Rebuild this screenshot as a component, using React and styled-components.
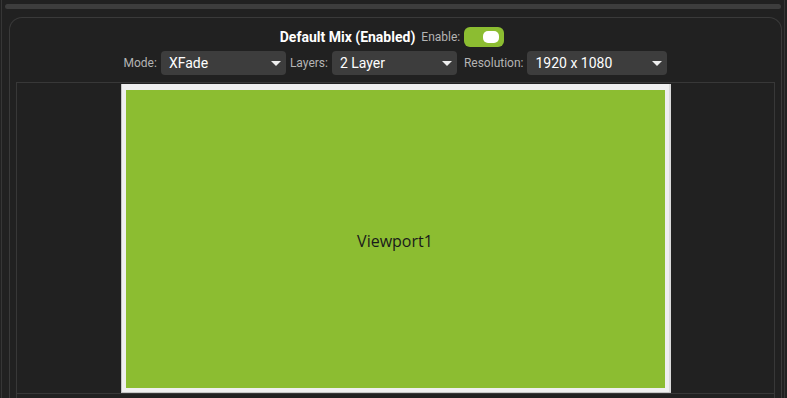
import React from "react";
import styled, { createGlobalStyle } from "styled-components";

const Global = createGlobalStyle`
  html, body { margin: 0; padding: 0; background: #212121; }
  body { font-family: Roboto, "Liberation Sans", sans-serif; overflow: hidden; }
  * { box-sizing: border-box; }
`;

const Shell = styled.div`
  height: 398px;
  margin: 0 2px 0 1px;
  border-left: 1px solid #363636;
  border-right: 1px solid #363636;
  padding: 4px 3px 0 3px;
  display: flex;
  flex-direction: column;
  background: #212121;
  overflow: hidden;
`;

const ScrollBar = styled.div`
  height: 5px;
  border-radius: 3px;
  background: #3d3d3d;
  flex: none;
`;

const Card = styled.section`
  flex: 1;
  margin: 8px -1px 0 4px;
  border: 1px solid #3a3a3a;
  border-bottom: none;
  border-radius: 13px 13px 0 0;
  padding: 9px 6px 0 6px;
  display: flex;
  flex-direction: column;
  min-height: 0;
`;

const HeaderRow = styled.div`
  display: flex;
  align-items: center;
  justify-content: center;
  height: 20px;
  padding-right: 7px;
`;

const Title = styled.span`
  color: #ffffff;
  font-weight: 700;
  font-size: 14px;
  margin-right: 6px;
`;

const Label = styled.span`
  color: #b4b4b4;
  font-size: 12px;
  white-space: nowrap;
  margin-right: ${(p) => p.$gap || 0}px;
`;

const Toggle = styled.div`
  width: 40px;
  height: 20px;
  border-radius: 6px;
  background: #8cbd31;
  display: flex;
  align-items: center;
  justify-content: flex-end;
  padding-right: 5px;
`;

const Knob = styled.div`
  width: 16px;
  height: 12px;
  border-radius: 5px;
  background: #ffffff;
`;

const ControlRow = styled.div`
  display: flex;
  align-items: center;
  justify-content: center;
  gap: 4px;
  margin-top: 4px;
  height: 24px;
`;

const Select = styled.div`
  width: ${(p) => p.$w}px;
  height: 24px;
  border-radius: 4px;
  background: #3d3d3d;
  color: #ffffff;
  font-size: 14px;
  display: flex;
  align-items: center;
  justify-content: space-between;
  padding: 0 5px 0 8px;
  margin-right: ${(p) => p.$gap || 0}px;
`;

const Caret = () => (
  <svg width="10" height="5" viewBox="0 0 10 5">
    <path d="M0 0 L10 0 L5 5 Z" fill="#eeeeee" />
  </svg>
);

const Panel = styled.div`
  flex: 1;
  margin-top: 7px;
  border: 1px solid #383838;
  border-bottom: none;
  padding: 1px 0 0 0;
  display: flex;
  justify-content: center;
  align-items: flex-start;
  min-height: 0;
  position: relative;
  &::after {
    content: "";
    position: absolute;
    left: -1px;
    right: -1px;
    top: 310px;
    height: 1px;
    background: #383838;
  }
`;

const Frame = styled.div`
  width: 550px;
  height: 309px;
  background: #efefef;
  padding: 6px 6px 5px 5px;
  box-shadow: inset 1px 0 0 #c6c6c6, inset 0 -1px 0 #c6c6c6, inset -2px 0 0 #dadada;
  display: flex;
`;

const Viewport = styled.div`
  flex: 1;
  background: #8cbd31;
  display: flex;
  align-items: center;
  justify-content: center;
  padding-top: 4px;
  color: #1a1a1a;
  font-family: "Open Sans", "Noto Sans", sans-serif;
  font-size: 16px;
`;

export default function App() {
  return (
    <>
      <Global />
      <Shell>
        <ScrollBar />
        <Card>
          <HeaderRow>
            <Title>Default Mix (Enabled)</Title>
            <Label $gap={4}>Enable:</Label>
            <Toggle>
              <Knob />
            </Toggle>
          </HeaderRow>
          <ControlRow>
            <Label>Mode:</Label>
            <Select $w={125}>
              <span>XFade</span>
              <Caret />
            </Select>
            <Label>Layers:</Label>
            <Select $w={125} $gap={3}>
              <span>2 Layer</span>
              <Caret />
            </Select>
            <Label>Resolution:</Label>
            <Select $w={140}>
              <span>1920 x 1080</span>
              <Caret />
            </Select>
          </ControlRow>
          <Panel>
            <Frame>
              <Viewport>Viewport1</Viewport>
            </Frame>
          </Panel>
        </Card>
      </Shell>
    </>
  );
}
